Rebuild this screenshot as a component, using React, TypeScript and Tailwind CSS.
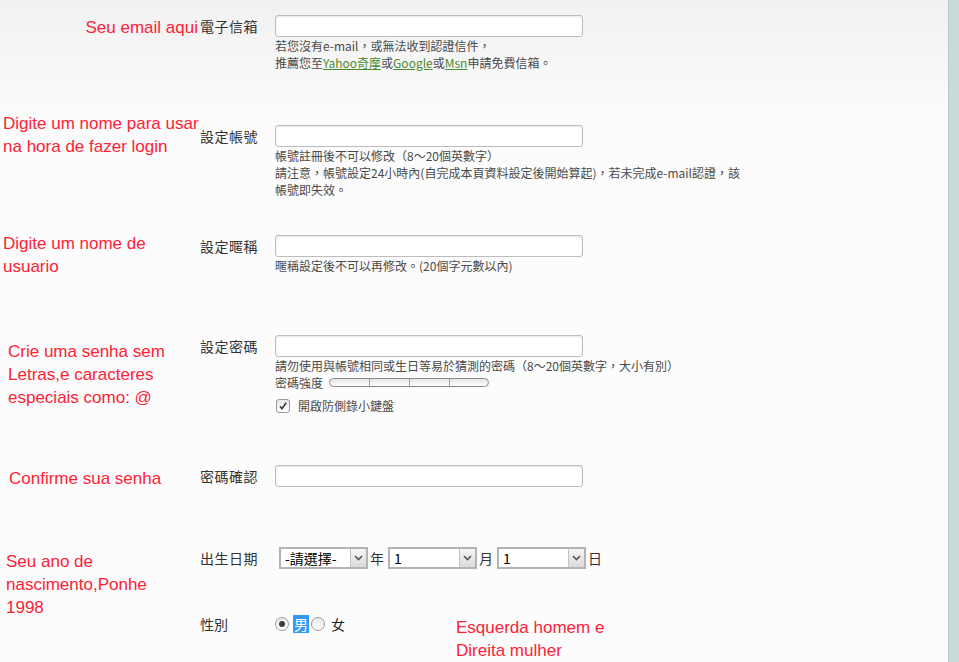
import type { ReactNode } from "react";

const CJK = "font-['Noto_Sans_CJK_TC','Noto_Sans',sans-serif]";
const NOTE = "font-['Liberation_Sans',Arial,sans-serif] text-[17px] leading-[23px] text-[#ff2236] whitespace-nowrap";

function TextInput() {
  return (
    <div className="h-[22px] w-[308px] rounded-[3px] border border-[#bdbdbd] bg-white shadow-[inset_0_1px_2px_rgba(0,0,0,0.1)]" />
  );
}

function Help({ children }: { children: ReactNode }) {
  return <div className="text-[12px] leading-[17px] text-[#4a4a4a]">{children}</div>;
}

function FieldRow({
  height,
  note,
  noteClass,
  label,
  children,
}: {
  height: number;
  note?: ReactNode;
  noteClass?: string;
  label: string;
  children: ReactNode;
}) {
  return (
    <div className="flex" style={{ height }}>
      <div className={`w-[200px] shrink-0 ${noteClass ?? ""}`}>
        {note && <div className={NOTE}>{note}</div>}
      </div>
      <div className="w-[75px] shrink-0 pt-[15px] text-[14px] leading-[22px] tracking-[0.5px] text-[#333]">
        {label}
      </div>
      <div className="flex-1 pt-[15px]">{children}</div>
    </div>
  );
}

function Chevron() {
  return (
    <svg width="9" height="6" viewBox="0 0 9 6" fill="none">
      <path d="M1 1l3.5 3.5L8 1" stroke="#555" strokeWidth="1.6" />
    </svg>
  );
}

function FakeSelect({ value }: { value: string }) {
  return (
    <div className="flex h-[22px] w-[89px] border-2 border-[#b3b3b3] bg-white">
      <span className="flex-1 pl-[4px] text-[14px] leading-[18px] text-black">{value}</span>
      <span className="flex w-[16px] items-center justify-center border-l border-[#c4c4c4] bg-gradient-to-b from-[#f6f6f6] to-[#dadada]">
        <Chevron />
      </span>
    </div>
  );
}

function Radio({ checked }: { checked?: boolean }) {
  return (
    <span className="flex h-[14px] w-[14px] items-center justify-center rounded-full border border-[#9a9a9a] bg-gradient-to-b from-[#e8e8e8] to-white">
      {checked && <span className="h-[6px] w-[6px] rounded-full bg-[#3a3a3a]" />}
    </span>
  );
}

export default function App() {
  return (
    <div className={`flex h-[662px] w-[959px] flex-col overflow-hidden ${CJK}`}>
      <div className="flex flex-1">
        <div className="w-[948px] bg-gradient-to-b from-[#f1f1f1] via-[#fbfbfb] to-[#fcfcfc] bg-[length:100%_220px] bg-no-repeat bg-[#fcfcfc]">
          <FieldRow height={110} label="電子信箱" note="Seu email aqui" noteClass="pt-[16px] pr-[2px] text-right">
            <TextInput />
            <Help>
              若您沒有e-mail，或無法收到認證信件，
              <br />
              推薦您至<span className="text-[#4e8a2e] underline">Yahoo奇摩</span>或
              <span className="text-[#4e8a2e] underline">Google</span>或
              <span className="text-[#4e8a2e] underline">Msn</span>申請免費信箱。
            </Help>
          </FieldRow>

          <FieldRow
            height={110}
            label="設定帳號"
            noteClass="pt-[2px] pl-[3px]"
            note={
              <>
                Digite um nome para usar
                <br />
                na hora de fazer login
              </>
            }
          >
            <TextInput />
            <Help>
              帳號註冊後不可以修改（8～20個英數字）
              <br />
              請注意，帳號設定24小時內(自完成本頁資料設定後開始算起)，若未完成e-mail認證，該
              <br />
              帳號即失效。
            </Help>
          </FieldRow>

          <FieldRow
            height={100}
            label="設定暱稱"
            noteClass="pt-[12px] pl-[3px]"
            note={
              <>
                Digite um nome de
                <br />
                usuario
              </>
            }
          >
            <TextInput />
            <Help>暱稱設定後不可以再修改。(20個字元數以內)</Help>
          </FieldRow>

          <FieldRow
            height={130}
            label="設定密碼"
            noteClass="pt-[20px] pl-[8px]"
            note={
              <>
                Crie uma senha sem
                <br />
                Letras,e caracteres
                <br />
                especiais como: @
              </>
            }
          >
            <TextInput />
            <Help>請勿使用與帳號相同或生日等易於猜測的密碼（8～20個英數字，大小有別）</Help>
            <div className="flex h-[17px] items-center gap-[6px] text-[12px] text-[#4a4a4a]">
              <span>密碼強度</span>
              <div className="flex h-[9px] w-[160px] overflow-hidden rounded-full border border-[#8c8c8c] bg-gradient-to-b from-[#e4e4e4] to-white">
                <span className="w-[40px] border-r border-[#a5a5a5]" />
                <span className="w-[40px] border-r border-[#a5a5a5]" />
                <span className="w-[40px] border-r border-[#a5a5a5]" />
                <span className="flex-1" />
              </div>
            </div>
            <div className="mt-[6px] flex items-center gap-[8px] pl-[1px] text-[12px] text-[#4a4a4a]">
              <span className="flex h-[14px] w-[14px] items-center justify-center rounded-[3px] border border-[#9a9a9a] bg-gradient-to-b from-[#e6e6e6] to-white">
                <svg width="10" height="10" viewBox="0 0 10 10" fill="none">
                  <path d="M2 5.2l2 2.6L8.2 1.8" stroke="#333" strokeWidth="1.5" />
                </svg>
              </span>
              <span>開啟防側錄小鍵盤</span>
            </div>
          </FieldRow>

          <FieldRow height={82} label="密碼確認" noteClass="pt-[17px] pl-[9px]" note="Confirme sua senha">
            <TextInput />
          </FieldRow>

          <FieldRow
            height={70}
            label="出生日期"
            noteClass="pt-[18px] pl-[6px]"
            note={
              <>
                Seu ano de
                <br />
                nascimento,Ponhe
                <br />
                1998
              </>
            }
          >
            <div className="flex items-center pl-[4px] text-[14px] text-[#333]">
              <FakeSelect value="-請選擇-" />
              <span className="ml-[2px] mr-[4px]">年</span>
              <FakeSelect value="1" />
              <span className="ml-[2px] mr-[4px]">月</span>
              <FakeSelect value="1" />
              <span className="ml-[2px]">日</span>
            </div>
          </FieldRow>

          <div className="flex">
            <div className="w-[200px] shrink-0" />
            <div className="w-[75px] shrink-0 pt-[11px] text-[14px] leading-[22px] text-[#333]">性別</div>
            <div className="flex flex-1">
              <div className="flex h-[44px] w-[181px] shrink-0 items-start pt-[11px] text-[14px] text-[#222]">
                <div className="flex h-[22px] items-center">
                  <Radio checked />
                  <span className="ml-[4px] bg-[#3399ff] px-[1px] leading-[18px] text-white">男</span>
                  <span className="ml-[2px]">
                    <Radio />
                  </span>
                  <span className="ml-[6px]">女</span>
                </div>
              </div>
              <div className={`pt-[14px] ${NOTE}`}>
                Esquerda homem e
                <br />
                Direita mulher
              </div>
            </div>
          </div>
        </div>
        <div className="w-[11px] border-l border-[#b5c9c6] bg-[#c8dbd8]" />
      </div>
      <div className="flex h-[3px] shrink-0 bg-[#6a7da8]">
        <span className="ml-[38px] w-[59px] border-t border-[#e4e7ef] bg-[#8c9cc0]" />
        <span className="ml-[3px] w-[58px] border-t border-[#c9d0e0] bg-[#7587b0]" />
        <span className="ml-[4px] w-[58px] border-t border-[#c9d0e0] bg-[#7587b0]" />
      </div>
    </div>
  );
}
